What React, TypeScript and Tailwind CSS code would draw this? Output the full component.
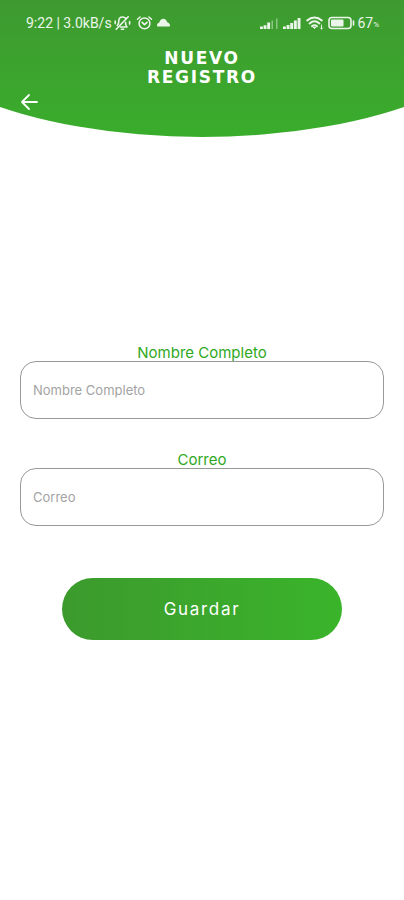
import { useState } from "react";

function StatusBar() {
  return (
    <div className="flex h-5 items-center justify-between pl-[26px] pr-[25px] font-['Roboto',sans-serif] text-[14px] leading-5 text-white/90">
      {/* Clock and notifications */}
      <div className="flex items-center">
        <span>9:22 | 3.0kB/s</span>
        <svg className="ml-[2px]" width="17" height="16" viewBox="0 0 17 16" fill="none" stroke="currentColor" strokeWidth="1.6" strokeLinecap="round" strokeLinejoin="round">
          <path d="M11.800 3.400C11 2.400 9.700 2 8.500 2 6.200 2 4.800 3.800 4.800 5.900c0 2.500-.6 3.600-1.500 4.600" />
          <path d="M6.400 12h6.600c-1-1.200-1.500-2.200-1.500-4.600" />
          <path d="M7.400 14.200h2.200M2.200 14.200 14.200 1.800" />
          <path d="M1.200 6v2.600M15.600 6.500v2.600" />
        </svg>
        <svg className="ml-[5px]" width="17" height="16" viewBox="0 0 17 16" fill="none" stroke="currentColor" strokeWidth="1.5" strokeLinecap="round" strokeLinejoin="round">
          <circle cx="8.5" cy="8.4" r="5.4" />
          <path d="m6.200 7.400 2.300 2.200L11 7.400" strokeWidth="1.700" />
          <path d="M1.500 4.200 4.100 2M15.500 4.200 12.900 2" />
        </svg>
        <svg className="ml-[4px]" width="13" height="16" viewBox="0 0 13 16" fill="currentColor">
          <path d="M1 11.500c-.6 0-1-.4-1-1C0 9 1 8.200 2.300 7.600 3 5 4.600 3.800 6.300 3.800c1.900 0 3.200 1.300 3.900 3.400C11.900 7.800 13 8.900 13 10.500c0 .6-.4 1-1 1z" />
        </svg>
      </div>

      {/* Signal, wifi and battery */}
      <div className="flex items-center">
        <svg width="18" height="14" viewBox="0 0 18 14" fill="currentColor">
          <path d="M0 10.500h2.900V13H0zM3.600 9.200h2.900V13H3.600zM7.200 6.600h2.900V13H7.200z" />
          <path opacity=".45" d="M11.500 4.500H13V13h-1.500zM16 2.500h1.500V13H16z" />
        </svg>
        <svg className="ml-[5px]" width="18" height="14" viewBox="0 0 18 14" fill="currentColor">
          <path d="M0 10.500h2.900V13H0zM3.600 9h2.900v4H3.600zM7.200 7h2.900v6H7.200zM10.900 4.600h2.900V13h-2.900zM14.600 2h2.900v11h-2.900z" />
        </svg>
        <svg className="ml-[5px]" width="18" height="14" viewBox="0 0 18 14" fill="none" stroke="currentColor" strokeWidth="2" strokeLinecap="round">
          <path d="M1.200 4.400C5.500.5 11.500.5 15.800 4.400M3.600 7.400c3-2.600 6.800-2.600 9.800 0M6 10.200c1.600-1.300 3.400-1.300 5 0" />
          <path d="m7.500 11.600 1 1 1-1z" fill="currentColor" strokeWidth="1" />
          <path d="M15.500 9v4m-1-1 1 1 1-1" strokeWidth="1" />
        </svg>
        <svg className="ml-[4px]" width="27" height="14" viewBox="0 0 27 14" fill="none">
          <rect x="1" y="1.500" width="22" height="11" rx="3" stroke="currentColor" strokeWidth="1.600" />
          <rect x="3" y="3.500" width="12.500" height="7" rx="1" fill="currentColor" />
          <path d="M25.500 5v4" stroke="currentColor" strokeWidth="1.600" strokeLinecap="round" />
        </svg>
        <span className="ml-[2px]">67</span>
        <span className="pt-1 text-[8px] leading-3">%</span>
      </div>
    </div>
  );
}

function Header() {
  return (
    <header className="h-[137px] bg-linear-to-b from-[#3e9a30] to-[#39ad2b] pt-[13px] [clip-path:ellipse(80%_100%_at_50%_0)]">
      <StatusBar />
      <h1 className="mt-4 text-center font-['DejaVu_Sans',sans-serif] text-[17px] leading-[19px] font-bold tracking-widest text-white">
        NUEVO
        <br />
        REGISTRO
      </h1>
      <button type="button" aria-label="Volver" className="ml-[19px] mt-[5px] block text-white">
        <svg width="20" height="20" viewBox="0 0 20 20" fill="none" stroke="currentColor" strokeWidth="1.800" strokeLinecap="round" strokeLinejoin="round">
          <path d="M18 10H3M10 3l-7 7 7 7" />
        </svg>
      </button>
    </header>
  );
}

type FieldProps = {
  id: string;
  label: string;
  type?: string;
  value: string;
  onChange: (value: string) => void;
};

function Field({ id, label, type = "text", value, onChange }: FieldProps) {
  return (
    <div className="flex flex-col">
      <label htmlFor={id} className="text-center text-[15px] leading-[17px] text-[#2fa822]">
        {label}
      </label>
      <input
        id={id}
        type={type}
        placeholder={label}
        value={value}
        onChange={(e) => onChange(e.target.value)}
        className="h-[58px] w-full rounded-2xl border border-[#999999] bg-white px-3 text-[13px] text-gray-700 outline-none placeholder:text-[#a3a3a3]"
      />
    </div>
  );
}

export default function App() {
  const [nombre, setNombre] = useState("");
  const [correo, setCorreo] = useState("");

  return (
    <div className="min-h-screen bg-white font-['Inter',sans-serif]">
      <Header />

      <form className="px-5 pt-[207px]" onSubmit={(e) => e.preventDefault()}>
        <div className="flex flex-col gap-8">
          <Field id="nombre" label="Nombre Completo" value={nombre} onChange={setNombre} />
          <Field id="correo" label="Correo" type="email" value={correo} onChange={setCorreo} />
        </div>

        <div className="mt-[52px] px-[42px]">
          <button
            type="submit"
            className="h-[62px] w-full rounded-full bg-linear-to-r from-[#3c9a2d] to-[#3ab42b] pt-0.5 text-[17px] tracking-widest text-white"
          >
            Guardar
          </button>
        </div>
      </form>
    </div>
  );
}
